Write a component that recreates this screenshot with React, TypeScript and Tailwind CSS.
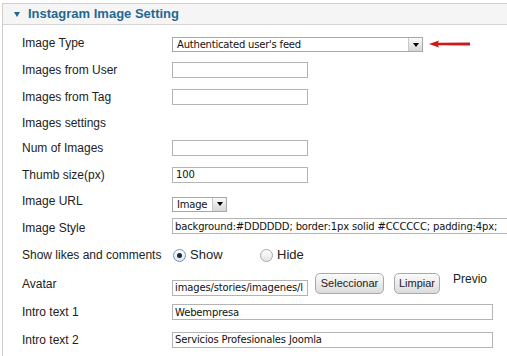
import type { ReactNode } from "react";

const inputFont = { fontFamily: '"DejaVu Sans", Verdana, sans-serif' };

function Row({ label, h, children }: { label: string; h: string; children?: ReactNode }) {
  return (
    <div className={`flex items-center ${h}`}>
      <div className="w-[150px] shrink-0 text-[12px] text-[#222]">{label}</div>
      {children}
    </div>
  );
}

function TextBox({ value = "", w, className = "" }: { value?: string; w: string; className?: string }) {
  return (
    <div
      style={inputFont}
      className={`flex h-[16px] shrink-0 items-center overflow-hidden whitespace-nowrap border border-[#b4b4b4] bg-white px-[2px] text-[10px] tracking-[-0.15px] text-[#111] ${w} ${className}`}
    >
      {value}
    </div>
  );
}

function SelectBox({ value, w, className = "" }: { value: string; w: string; className?: string }) {
  return (
    <div
      style={inputFont}
      className={`flex h-[15px] shrink-0 items-center border border-[#a8a8a8] bg-white text-[10px] tracking-[-0.2px] text-[#111] ${w} ${className}`}
    >
      <span className="flex-1 overflow-hidden whitespace-nowrap pl-[4px]">{value}</span>
      <span className="flex h-full w-[14px] items-center justify-center border-l border-[#c8c8c8] bg-gradient-to-b from-[#fafafa] to-[#d6d6d6]">
        <span className="h-0 w-0 border-x-[3px] border-t-[4px] border-x-transparent border-t-black" />
      </span>
    </div>
  );
}

function Radio({ checked, label, w }: { checked?: boolean; label: string; w: string }) {
  return (
    <div className={`flex items-center ${w}`}>
      <span
        className={`ml-[1px] flex h-[13px] w-[13px] items-center justify-center rounded-full border bg-gradient-to-b from-white to-[#e4e4e4] ${
          checked ? "border-[#6a94c4]" : "border-[#a9a9a9]"
        }`}
      >
        {checked && <span className="h-[5px] w-[5px] rounded-full bg-[#1c2a3a]" />}
      </span>
      <span className="ml-[4px] text-[13px] text-[#222]">{label}</span>
    </div>
  );
}

function Button({ children, w }: { children: ReactNode; w: string }) {
  return (
    <div
      className={`flex h-[21px] shrink-0 items-center justify-center whitespace-nowrap rounded-[5px] border border-[#a9a9a9] bg-gradient-to-b from-[#fbfbfb] to-[#dcdcdc] text-[11px] text-[#222] ${w}`}
    >
      {children}
    </div>
  );
}

export default function App() {
  return (
    <div
      className="h-[356px] w-[507px] overflow-hidden bg-white pl-[2px] pt-[3px]"
      style={{ fontFamily: '"Liberation Sans", Arial, sans-serif' }}
    >
      <div className="h-[353px] border-l border-t border-[#cfcfcf]">
        <div className="flex h-[21px] items-center border-b border-[#d4d4d4] bg-[#f5f5f5] pl-[11px]">
          <span className="h-0 w-0 border-x-[3.5px] border-t-[5px] border-x-transparent border-t-[#1f6896]" />
          <span className="ml-[8px] text-[13px] font-bold text-[#1f6896]">Instagram Image Setting</span>
        </div>

        <div className="pl-[19px] pt-[5px]">
          <Row label="Image Type" h="h-[26px]">
            <SelectBox value="Authenticated user's feed" w="w-[251px]" className="mt-[3px]" />
            <svg width="42" height="8" viewBox="0 0 42 8" className="ml-[6px] mt-[1px]">
              <path d="M0 4 L10 0.5 L9 2.8 L41 2.6 L41 5.4 L9 5.2 L10 7.5 Z" fill="#d01818" />
            </svg>
          </Row>
          <Row label="Images from User" h="h-[27px]">
            <TextBox w="w-[136px]" />
          </Row>
          <Row label="Images from Tag" h="h-[27px]">
            <TextBox w="w-[136px]" />
          </Row>
          <Row label="Images settings" h="h-[25px]" />
          <Row label="Num of Images" h="h-[26px]">
            <TextBox w="w-[136px]" />
          </Row>
          <Row label="Thumb size(px)" h="h-[27px]">
            <TextBox value="100" w="w-[136px]" className="px-[3px]" />
          </Row>
          <Row label="Image URL" h="h-[26px]">
            <SelectBox value="Image" w="w-[55px]" className="mt-[6px]" />
          </Row>
          <Row label="Image Style" h="h-[27px]">
            <TextBox
              value="background:#DDDDDD; border:1px solid #CCCCCC; padding:4px;"
              w="w-[360px]"
              className="mt-[-3px]"
            />
          </Row>
          <Row label="Show likes and comments" h="h-[28px]">
            <Radio checked label="Show" w="w-[87px]" />
            <Radio label="Hide" w="w-[60px]" />
          </Row>
          <Row label="Avatar" h="h-[29px]">
            <TextBox value="images/stories/imagenes/l" w="w-[136px]" className="mt-[8px] h-[14px]" />
            <div className="ml-[7px]">
              <Button w="w-[69px]">Seleccionar</Button>
            </div>
            <div className="ml-[10px]">
              <Button w="w-[46px]">Limpiar</Button>
            </div>
            <span className="mb-[10px] ml-[13px] text-[12px] text-[#222]">Previo</span>
          </Row>
          <Row label="Intro text 1" h="h-[28px]">
            <TextBox value="Webempresa" w="w-[321px]" />
          </Row>
          <Row label="Intro text 2" h="h-[27px]">
            <TextBox value="Servicios Profesionales Joomla" w="w-[321px]" />
          </Row>
        </div>
      </div>
    </div>
  );
}
